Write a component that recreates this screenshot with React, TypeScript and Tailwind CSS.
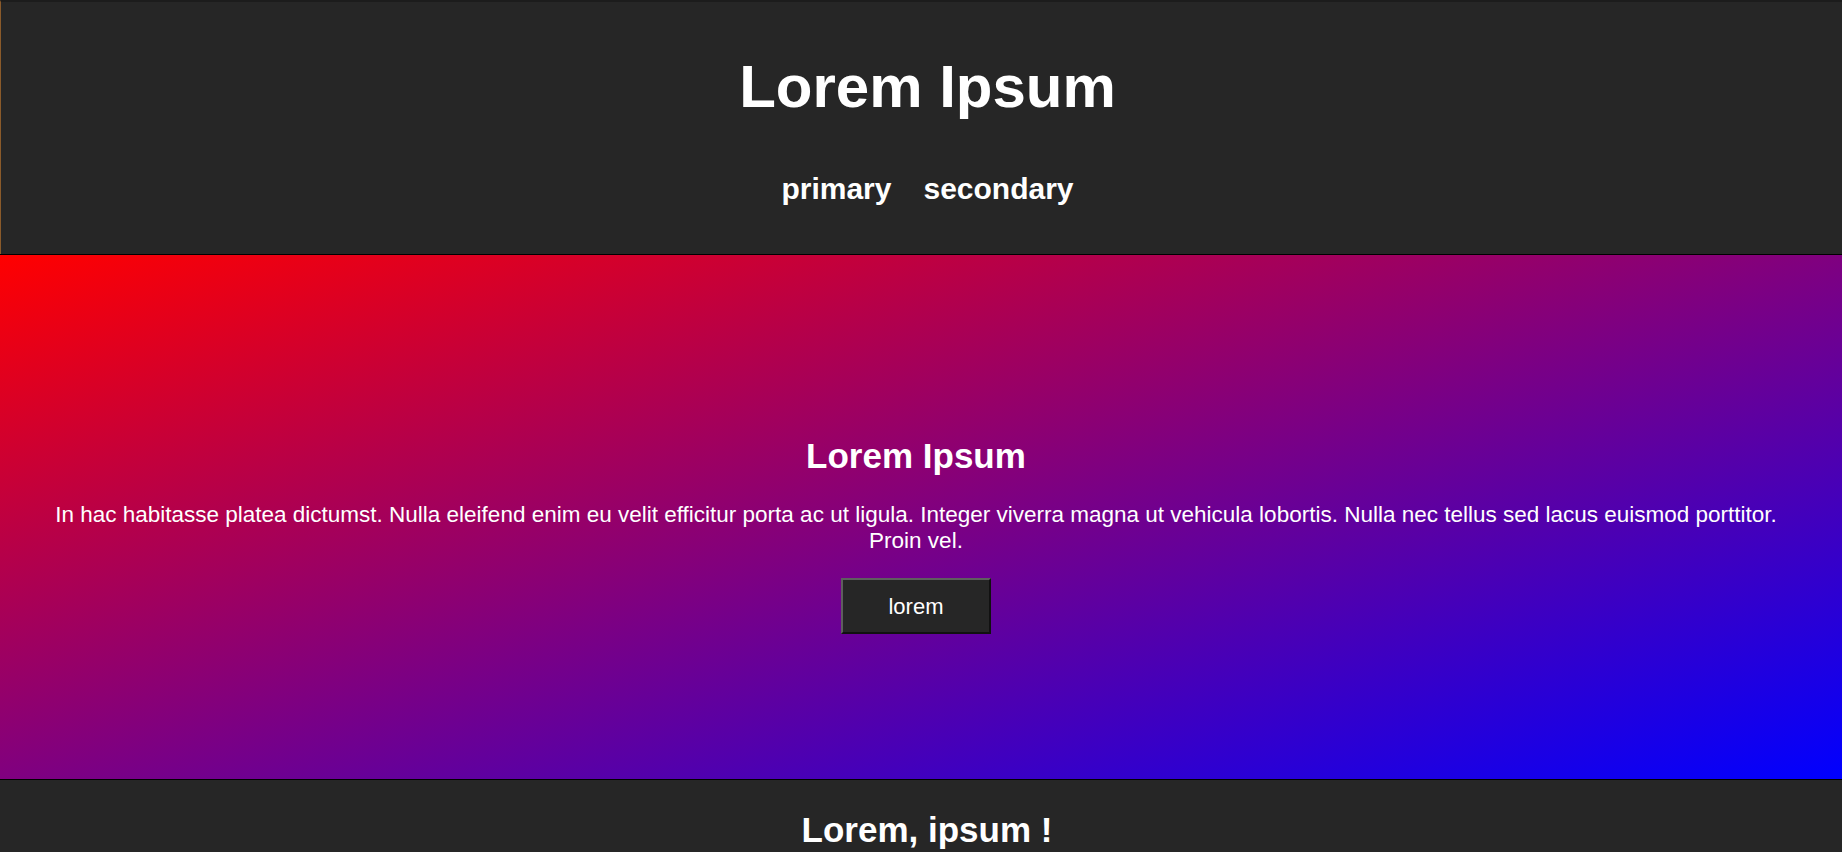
export default function App() {
  return (
    <div className="min-h-screen bg-[#262626] text-white font-['Liberation_Sans',Arial,sans-serif]">
      <header className="h-[254px] border-t-2 border-t-[#1c1c1c] border-l border-l-[#8a5a2a] flex flex-col items-center pt-[55px] pl-[12px]">
        <h1 className="text-[60px] leading-[60px] font-bold">Lorem Ipsum</h1>
        <nav className="mt-[57px] flex gap-[32px] text-[30px] leading-[29px] font-bold">
          <a href="#">primary</a>
          <a href="#">secondary</a>
        </nav>
      </header>

      <section className="h-[526px] border-y border-black bg-[linear-gradient(to_bottom_right,#ff0000,#0000ff)] flex flex-col items-center pt-[183px] pl-[40px] pr-[50px] text-center">
        <h2 className="text-[35px] leading-[35px] font-bold">Lorem Ipsum</h2>
        <p className="mt-[29px] text-[22.5px] leading-[26px]">
          In hac habitasse platea dictumst. Nulla eleifend enim eu velit efficitur porta ac ut ligula. Integer viverra magna ut vehicula lobortis. Nulla nec tellus sed lacus euismod porttitor. Proin vel.
        </p>
        <button className="mt-[24px] w-[150px] h-[56px] bg-[#262626] text-[22px] border-2 border-t-[#5e5e5e] border-l-[#5e5e5e] border-r-[#111] border-b-[#111]">
          lorem
        </button>
      </section>

      <footer className="flex flex-col items-center pt-[32px] pb-10 pl-[12px]">
        <h2 className="text-[35px] leading-[35px] font-bold">Lorem, ipsum !</h2>
      </footer>
    </div>
  );
}
